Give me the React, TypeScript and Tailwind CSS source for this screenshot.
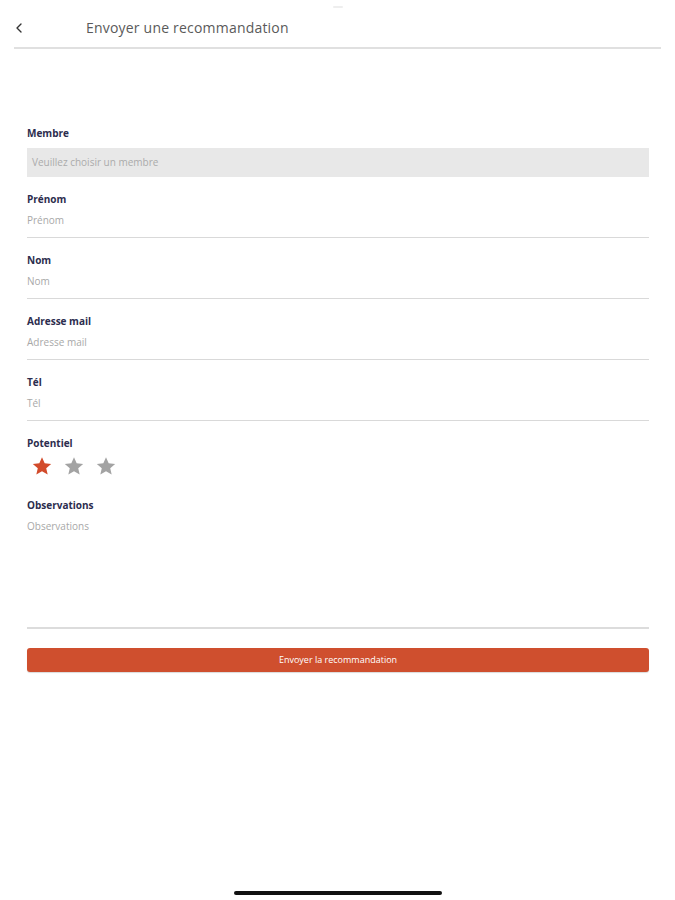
import { ChevronLeft } from "lucide-react";

const Star = ({ on }: { on: boolean }) => (
  <svg viewBox="0 0 24 24" className="w-[22px] h-[22px]">
    <path
      d="M12 2.5l2.9 6.6 7.1.6-5.4 4.7 1.6 7-6.2-3.8-6.2 3.8 1.6-7L2 9.7l7.1-.6z"
      fill={on ? "#d24b2b" : "#a3a3a3"}
    />
  </svg>
);

const Field = ({ label, placeholder }: { label: string; placeholder: string }) => (
  <div className="pt-[16px] pb-[10px] border-b border-[#d9d9d9]">
    <div className="text-[10px] leading-[13px] font-bold text-[#2c2d4e]">{label}</div>
    <div className="mt-[7px] text-[10px] leading-[14px] text-[#a8a8a8]">{placeholder}</div>
  </div>
);

export default function App() {
  return (
    <div className="relative w-[675px] h-[900px] bg-white font-['Open_Sans',sans-serif]">
      <div className="flex justify-center pt-[6px]">
        <div className="w-[10px] h-[2px] rounded bg-[#eeeeee]" />
      </div>
      <div className="mx-[14px] h-[41px] flex items-center border-b-2 border-[#e0e0e0]">
        <ChevronLeft className="w-[16px] h-[16px] -ml-[3px] mt-[1px] text-[#333]" strokeWidth={2} />
        <span className="ml-[59px] text-[14px] text-[#5a5a5a] tracking-[0.2px]">Envoyer une recommandation</span>
      </div>

      <div className="mx-[27px] w-[622px] pt-[78px]">
        <div className="text-[10px] leading-[13px] font-bold text-[#2c2d4e]">Membre</div>
        <div className="mt-[8px] h-[29px] bg-[#e8e8e8] flex items-center px-[5px] text-[10px] text-[#ababab]">
          Veuillez choisir un membre
        </div>
        <Field label="Prénom" placeholder="Prénom" />
        <Field label="Nom" placeholder="Nom" />
        <Field label="Adresse mail" placeholder="Adresse mail" />
        <Field label="Tél" placeholder="Tél" />

        <div className="pt-[16px]">
          <div className="text-[10px] leading-[13px] font-bold text-[#2c2d4e]">Potentiel</div>
          <div className="mt-[5px] ml-[4px] flex gap-[10px]">
            <Star on />
            <Star on={false} />
            <Star on={false} />
          </div>
        </div>

        <div className="pt-[22px] h-[152px] border-b-2 border-[#dcdcdc]">
          <div className="text-[10px] leading-[13px] font-bold text-[#2c2d4e]">Observations</div>
          <div className="mt-[7px] text-[10px] leading-[14px] text-[#a8a8a8]">Observations</div>
        </div>

        <button className="mt-[19px] w-full h-[24px] rounded-[3px] bg-[#cf4f2e] text-white text-[9px] shadow-[0_1px_1px_rgba(0,0,0,0.15)]">
          Envoyer la recommandation
        </button>
      </div>

      <div className="absolute bottom-[5px] left-[234px] w-[208px] h-[4px] rounded-full bg-[#111]" />
    </div>
  );
}
